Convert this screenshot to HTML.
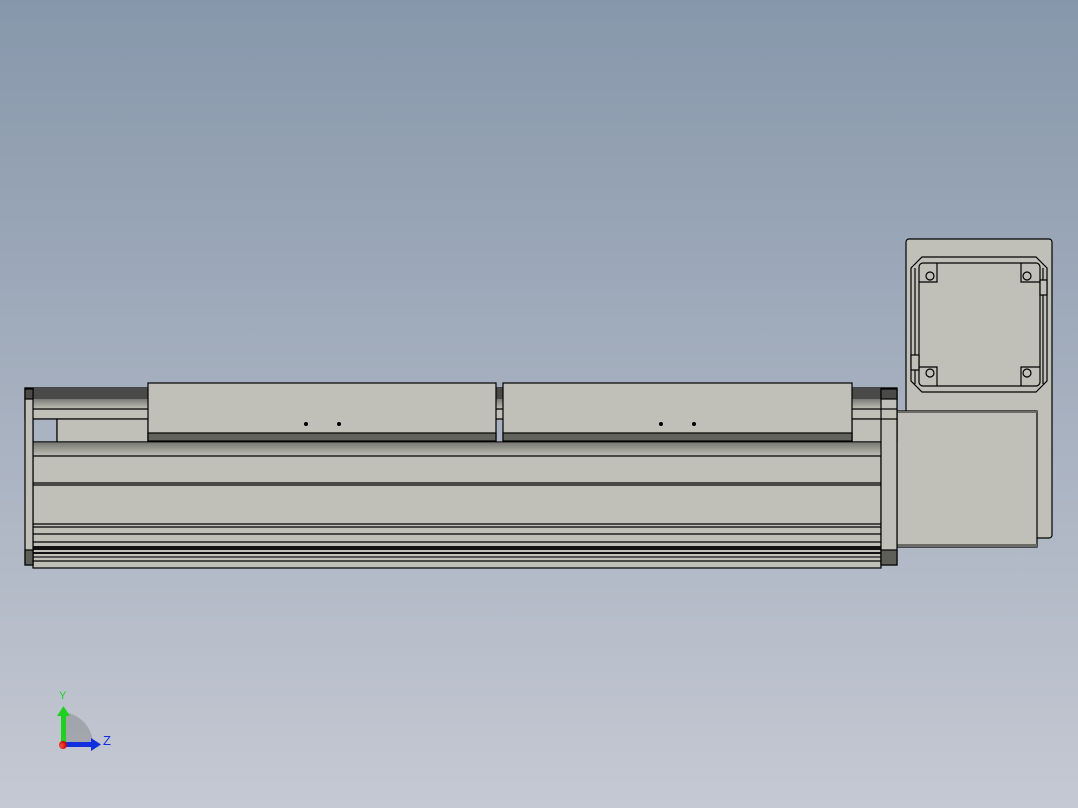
<!DOCTYPE html>
<html><head><style>html,body{margin:0;padding:0;}body{width:1078px;height:808px;overflow:hidden;background:linear-gradient(#8797ab,#c5c9d3);}</style></head>
<body>
<svg width="1078" height="808" viewBox="0 0 1078 808" xmlns="http://www.w3.org/2000/svg" style="position:absolute;left:0;top:0">
<defs>
<linearGradient id="g1" x1="0" y1="0" x2="0" y2="1"><stop offset="0" stop-color="#7a7b74"/><stop offset="1" stop-color="#c0c0b8"/></linearGradient>
<radialGradient id="rd" cx="0.3" cy="0.6" r="0.7"><stop offset="0" stop-color="#ff5040"/><stop offset="1" stop-color="#c00000"/></radialGradient>
</defs>
<g stroke="#000" stroke-width="1.2" fill="#c0c0b8">
<!-- motor plate -->
<rect x="906" y="239" width="146" height="299" rx="3"/>
<polygon points="922,257 1036,257 1047,268 1047,381 1036,392 922,392 911,381 911,268" fill="none"/>
<rect x="919" y="263" width="121" height="123" rx="4" fill="none"/>
<line x1="915" y1="268" x2="915" y2="384"/>
<line x1="1043" y1="268" x2="1043" y2="384"/>
<rect x="1040" y="280" width="7" height="15"/>
<rect x="911" y="355" width="8" height="15"/>
<path d="M919,282 H937 V263 M1040,282 H1021 V263 M919,367 H937 V386 M1040,367 H1021 V386" fill="none"/>
<circle cx="930" cy="276" r="4"/><circle cx="1027" cy="276" r="4"/><circle cx="930" cy="373" r="4"/><circle cx="1027" cy="373" r="4"/>
<!-- motor body -->
<rect x="897" y="411" width="140" height="136"/>
<rect x="897" y="411" width="140" height="2" fill="#6a6b64" stroke="none"/>
<rect x="897" y="544" width="140" height="3" fill="#6a6b64" stroke="none"/>
<!-- rail top strip -->
<rect x="25" y="388" width="872" height="31"/>
<rect x="25" y="389" width="872" height="10" fill="#4a4b48" stroke="none"/>
<rect x="25" y="399" width="872" height="10" fill="url(#g1)" stroke="none"/>
<line x1="25" y1="409" x2="897" y2="409"/>
<!-- left box & window -->
<rect x="33" y="419" width="24" height="23" fill="#a9b3c2"/>
<rect x="57" y="419" width="91" height="23"/>
<rect x="852" y="419" width="45" height="23"/>
<!-- rail body -->
<rect x="33" y="442" width="848" height="126"/>
<rect x="33" y="443" width="848" height="13" fill="url(#g1)" stroke="none"/>
<line x1="33" y1="456" x2="881" y2="456"/>
<line x1="33" y1="483" x2="881" y2="483"/><line x1="33" y1="485" x2="881" y2="485"/>
<line x1="33" y1="524" x2="881" y2="524"/><line x1="33" y1="527" x2="881" y2="527"/>
<line x1="33" y1="534" x2="881" y2="534"/>
<line x1="33" y1="542" x2="881" y2="542"/>
<rect x="33" y="546" width="848" height="4" fill="#111" stroke="none"/>
<rect x="33" y="552" width="848" height="2" fill="#111" stroke="none"/>
<rect x="33" y="556" width="848" height="2" fill="#555" stroke="none"/>
<line x1="33" y1="561" x2="881" y2="561"/>
<!-- end caps -->
<rect x="25" y="388" width="8" height="177"/>
<rect x="25" y="389" width="8" height="10" fill="#4a4b48"/>
<rect x="25" y="550" width="8" height="15" fill="#5e5f58"/>
<rect x="881" y="388" width="16" height="177"/>
<rect x="881" y="389" width="16" height="10" fill="#4a4b48"/>
<rect x="881" y="550" width="16" height="15" fill="#5e5f58"/>
<line x1="881" y1="409" x2="897" y2="409"/><line x1="881" y1="419" x2="897" y2="419"/>
<!-- carriages -->
<rect x="148" y="383" width="348" height="58"/>
<rect x="148" y="433" width="348" height="8" fill="#62635c"/>
<rect x="503" y="383" width="349" height="58"/>
<rect x="503" y="433" width="349" height="8" fill="#62635c"/>
</g>
<g fill="#000"><circle cx="306" cy="424" r="2"/><circle cx="339" cy="424" r="2"/><circle cx="661" cy="424" r="2"/><circle cx="694" cy="424" r="2"/></g>
<!-- triad -->
<path d="M63,745 L63,712 A33,33 0 0 1 93,745 Z" fill="#9c9ea4" opacity="0.8"/>
<rect x="61" y="715" width="5" height="30" fill="#20d020"/>
<polygon points="57,716 63.5,706 70,716" fill="#20d020"/>
<rect x="63" y="742" width="29" height="5" fill="#1030e0"/>
<polygon points="91,738 101,744.5 91,751" fill="#1030e0"/>
<circle cx="63" cy="745" r="4" fill="url(#rd)"/>
<text x="59" y="699" font-family="Liberation Sans, sans-serif" font-size="11" fill="#20d020">Y</text>
<text x="103" y="745" font-family="Liberation Sans, sans-serif" font-size="13" fill="#1030e0">Z</text>
</svg>
</body></html>
